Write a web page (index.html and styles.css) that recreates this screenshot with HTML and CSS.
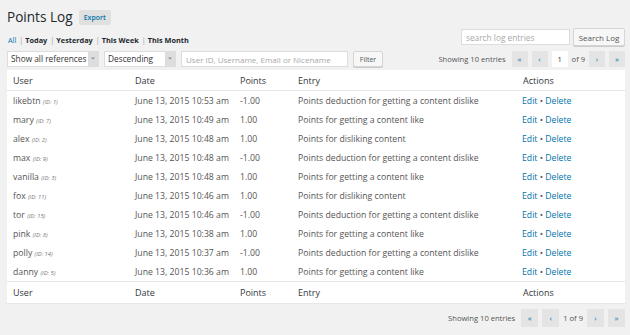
FILE: index.html
```html
<!DOCTYPE html>
<html lang="en">

<head>
  <meta charset="UTF-8">
  <title>Points Log</title>
  <link rel="stylesheet" href="styles.css">
</head>

<body>
  <div class="wrap">
    <div class="title-row">
      <h1>Points Log</h1>
      <a class="title-action" href="#">Export</a>
    </div>

    <div class="nav-row">
      <ul class="subsubsub">
        <li><a class="current" href="#">All</a></li>
        <li><span class="sep">|</span><a href="#">Today</a></li>
        <li><span class="sep">|</span><a href="#">Yesterday</a></li>
        <li><span class="sep">|</span><a href="#">This Week</a></li>
        <li><span class="sep">|</span><a href="#">This Month</a></li>
      </ul>
      <div class="search-box">
        <input type="text" placeholder="search log entries">
        <button class="button">Search Log</button>
      </div>
    </div>

    <div class="tablenav">
      <div class="filters">
        <div class="select sel-refs"><span>Show all references</span><span class="arrow">&#8964;</span></div>
        <div class="select sel-order"><span>Descending</span><span class="arrow">&#8964;</span></div>
        <input class="user-filter" type="text" placeholder="User ID, Username, Email or Nicename">
        <button class="button">Filter</button>
      </div>
      <div class="pagination">
        <span class="count">Showing 10 entries</span>
        <a class="page-btn" href="#">&laquo;</a>
        <a class="page-btn" href="#">&lsaquo;</a>
        <span class="current-page">1</span>
        <span class="total">of 9</span>
        <a class="page-btn" href="#">&rsaquo;</a>
        <a class="page-btn" href="#">&raquo;</a>
      </div>
    </div>

    <table class="log-table">
      <colgroup>
        <col class="c-user">
        <col class="c-date">
        <col class="c-points">
        <col class="c-entry">
        <col class="c-actions">
      </colgroup>
      <thead>
        <tr><th>User</th><th>Date</th><th>Points</th><th>Entry</th><th>Actions</th></tr>
      </thead>
      <tbody>
        <tr><td>likebtn <em>(ID: 1)</em></td><td>June 13, 2015 10:53 am</td><td>-1.00</td><td>Points deduction for getting a content dislike</td><td><a href="#">Edit</a> &bull; <a href="#">Delete</a></td></tr>
        <tr><td>mary <em>(ID: 7)</em></td><td>June 13, 2015 10:49 am</td><td>1.00</td><td>Points for getting a content like</td><td><a href="#">Edit</a> &bull; <a href="#">Delete</a></td></tr>
        <tr><td>alex <em>(ID: 2)</em></td><td>June 13, 2015 10:48 am</td><td>1.00</td><td>Points for disliking content</td><td><a href="#">Edit</a> &bull; <a href="#">Delete</a></td></tr>
        <tr><td>max <em>(ID: 9)</em></td><td>June 13, 2015 10:48 am</td><td>-1.00</td><td>Points deduction for getting a content dislike</td><td><a href="#">Edit</a> &bull; <a href="#">Delete</a></td></tr>
        <tr><td>vanilla <em>(ID: 3)</em></td><td>June 13, 2015 10:48 am</td><td>1.00</td><td>Points for getting a content like</td><td><a href="#">Edit</a> &bull; <a href="#">Delete</a></td></tr>
        <tr><td>fox <em>(ID: 11)</em></td><td>June 13, 2015 10:46 am</td><td>1.00</td><td>Points for disliking content</td><td><a href="#">Edit</a> &bull; <a href="#">Delete</a></td></tr>
        <tr><td>tor <em>(ID: 15)</em></td><td>June 13, 2015 10:46 am</td><td>-1.00</td><td>Points deduction for getting a content dislike</td><td><a href="#">Edit</a> &bull; <a href="#">Delete</a></td></tr>
        <tr><td>pink <em>(ID: 8)</em></td><td>June 13, 2015 10:38 am</td><td>1.00</td><td>Points for getting a content like</td><td><a href="#">Edit</a> &bull; <a href="#">Delete</a></td></tr>
        <tr><td>polly <em>(ID: 14)</em></td><td>June 13, 2015 10:37 am</td><td>-1.00</td><td>Points deduction for getting a content dislike</td><td><a href="#">Edit</a> &bull; <a href="#">Delete</a></td></tr>
        <tr><td>danny <em>(ID: 5)</em></td><td>June 13, 2015 10:36 am</td><td>1.00</td><td>Points for getting a content like</td><td><a href="#">Edit</a> &bull; <a href="#">Delete</a></td></tr>
      </tbody>
      <tfoot>
        <tr><th>User</th><th>Date</th><th>Points</th><th>Entry</th><th>Actions</th></tr>
      </tfoot>
    </table>

    <div class="tablenav bottom">
      <div class="pagination">
        <span class="count">Showing 10 entries</span>
        <a class="page-btn" href="#">&laquo;</a>
        <a class="page-btn" href="#">&lsaquo;</a>
        <span class="total">1 of 9</span>
        <a class="page-btn" href="#">&rsaquo;</a>
        <a class="page-btn" href="#">&raquo;</a>
      </div>
    </div>
  </div>
</body>

</html>
```

FILE: styles.css
```css
body,
html {
  margin: 0;
  padding: 0;
  background-color: #f1f1f1;
  color: #444;
  font-family: "Open Sans", Arial, sans-serif;
  font-size: 8px;
}

.wrap {
  padding: 0 5px 0 7px;
}

a {
  color: #0073aa;
  text-decoration: none;
}

.title-row {
  display: flex;
  align-items: center;
  gap: 6px;
  padding-top: 8px;
  height: 18px;
}

h1 {
  margin: 0;
  font-size: 13.6px;
  font-weight: 400;
  color: #23282d;
  line-height: 18px;
}

.title-action {
  background-color: #e0e0e0;
  border-radius: 2px;
  padding: 0 5px;
  height: 15px;
  line-height: 15px;
  font-size: 7px;
  font-weight: 600;
}

.nav-row {
  display: flex;
  justify-content: space-between;
  align-items: flex-end;
  margin-top: 3px;
}

.subsubsub {
  list-style: none;
  margin: 0 0 1px 1px;
  padding: 0;
  display: flex;
  font-size: 7.3px;
  color: #666;
}

.subsubsub a {
  color: #23282d;
  font-weight: 700;
}

.subsubsub a.current {
  color: #0073aa;
  font-weight: 400;
}

.subsubsub .sep {
  color: #999;
  margin: 0 2px 0 3px;
}

.search-box {
  display: flex;
  gap: 3px;
}

.search-box input {
  width: 109px;
  height: 16px;
  box-sizing: border-box;
  border: 1px solid #ddd;
  padding: 0 4px;
  font-family: inherit;
  font-size: 8.3px;
  color: #333;
  background-color: #fff;
}

input::placeholder {
  color: #a8a8a8;
}

.button {
  height: 18px;
  padding: 0 5px;
  border: 1px solid #d5d5d5;
  border-radius: 2px;
  background-color: #f7f7f7;
  color: #555;
  font-family: inherit;
  font-size: 8px;
  white-space: nowrap;
  box-shadow: 0 1px 0 #ccc;
}

.search-box .button {
  width: 52px;
  padding: 0;
  margin-top: -1px;
}

.tablenav {
  display: flex;
  justify-content: space-between;
  align-items: center;
  height: 20px;
  margin-top: 3px;
}

.filters {
  display: flex;
  align-items: center;
  gap: 5px;
}

.select {
  display: flex;
  justify-content: space-between;
  align-items: stretch;
  height: 16px;
  background-color: #fff;
  border: 1px solid #ddd;
  box-sizing: border-box;
  font-size: 8.3px;
  color: #333;
  line-height: 14px;
  padding-left: 3px;
}

.sel-refs {
  width: 92px;
}

.sel-order {
  width: 72px;
}

.select .arrow {
  width: 10px;
  background-color: #ddd;
  text-align: center;
  font-size: 7px;
  line-height: 10px;
  color: #555;
}

.user-filter {
  width: 167px;
  height: 16px;
  box-sizing: border-box;
  border: 1px solid #ddd;
  padding: 0 4px;
  font-family: inherit;
  font-size: 8px;
  background-color: #fff;
}

.filters .button {
  height: 16px;
  width: 30px;
  padding: 0;
  font-size: 7px;
}

.pagination {
  display: flex;
  align-items: center;
  gap: 4px;
  color: #555;
  font-size: 7.6px;
}

.pagination .count {
  margin-right: 2px;
}

.page-btn {
  width: 16px;
  height: 16px;
  line-height: 15px;
  text-align: center;
  background-color: #e4e4e4;
  color: #0073aa;
  font-size: 8px;
}

.current-page {
  width: 16px;
  height: 16px;
  line-height: 16px;
  text-align: center;
  background-color: #fff;
  color: #333;
}

.log-table {
  width: 618px;
  border-collapse: collapse;
  table-layout: fixed;
  background-color: #fff;
  box-shadow: 0 1px 1px rgba(0, 0, 0, 0.04);
  margin-top: 1px;
}

.c-user { width: 122px; }
.c-date { width: 105px; }
.c-points { width: 58px; }
.c-entry { width: 225px; }
.c-actions { width: 108px; }

.log-table th {
  text-align: left;
  font-weight: 400;
  font-size: 9px;
  color: #32373c;
  padding: 0 6px;
  height: 20px;
}

.log-table thead th {
  border-bottom: 1px solid #e5e5e5;
}

.log-table tfoot th {
  border-top: 1px solid #e5e5e5;
  height: 21px;
}

.log-table td {
  padding: 0 6px;
  height: 19px;
  color: #555;
  font-size: 8.7px;
  white-space: nowrap;
}

.log-table td em {
  font-size: 5.8px;
  color: #777;
}

.log-table td:last-child {
  padding-left: 5px;
}

.tablenav.bottom {
  justify-content: flex-end;
  margin-top: 5px;
  height: 20px;
}

.tablenav.bottom .page-btn {
  width: 17px;
  height: 18px;
  line-height: 17px;
}
```
